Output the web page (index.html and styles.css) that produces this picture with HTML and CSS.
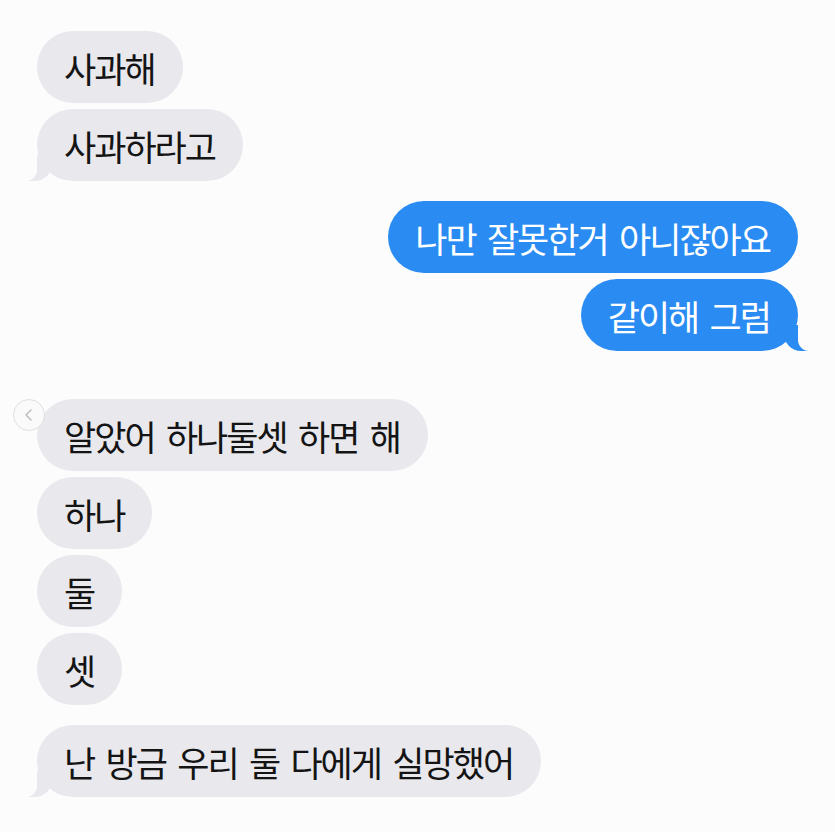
FILE: index.html
```html
<!DOCTYPE html>
<html lang="ko">
<head>
<meta charset="utf-8">
<link rel="stylesheet" href="styles.css">
</head>
<body>
<div class="chat">
  <div class="msg in first">사과해</div>
  <div class="msg in tail">사과하라고</div>

  <div class="msg out group">나만 잘못한거 아니잖아요</div>
  <div class="msg out tail">같이해 그럼</div>

  <div class="msg in group big">
    <span class="back"><svg width="12" height="14" viewBox="0 0 12 14"><path d="M8 2 L3 7 L8 12" fill="none" stroke="#b9b9bd" stroke-width="1.4" stroke-linecap="round" stroke-linejoin="round"/></svg></span>
    알았어 하나둘셋 하면 해
  </div>
  <div class="msg in">하나</div>
  <div class="msg in">둘</div>
  <div class="msg in">셋</div>
  <div class="msg in tail group2">난 방금 우리 둘 다에게 실망했어</div>
</div>
</body>
</html>
```

FILE: styles.css
```css
html, body {
  margin: 0;
  padding: 0;
  background: #fcfcfc;
}

.chat {
  width: 835px;
  height: 832px;
  box-sizing: border-box;
  padding: 31px 37px 0 37px;
  display: flex;
  flex-direction: column;
  align-items: flex-start;
  gap: 6px;
  font-family: "Noto Sans CJK KR", "Noto Sans", sans-serif;
}

.msg {
  position: relative;
  z-index: 0;
  height: 72px;
  box-sizing: border-box;
  padding: 0 28px 0 27px;
  border-radius: 36px;
  display: flex;
  align-items: center;
  font-size: 35px;
  letter-spacing: -2px;
  word-spacing: 3.5px;
  white-space: nowrap;
}

.in {
  background: #e8e8ed;
  color: #141414;
}

.out {
  background: #2a8cf2;
  color: #ffffff;
  align-self: flex-end;
}

.group {
  margin-top: 14px;
}

.msg.in.group.big {
  margin-top: 42px;
}

.group2 {
  margin-top: 14px;
}

.in.tail::before {
  content: "";
  position: absolute;
  bottom: 0;
  left: -9px;
  width: 24px;
  height: 26px;
  background: #e8e8ed;
  border-bottom-right-radius: 17px;
  z-index: -1;
}

.in.tail::after {
  content: "";
  position: absolute;
  bottom: 0;
  left: -26px;
  width: 26px;
  height: 26px;
  background: #fcfcfc;
  border-bottom-right-radius: 11px;
  z-index: -1;
}

.out.tail::before {
  content: "";
  position: absolute;
  bottom: 0;
  right: -12px;
  width: 26px;
  height: 26px;
  background: #2a8cf2;
  border-bottom-left-radius: 17px;
  z-index: -1;
}

.out.tail::after {
  content: "";
  position: absolute;
  bottom: 0;
  right: -26px;
  width: 26px;
  height: 26px;
  background: #fcfcfc;
  border-bottom-left-radius: 11px;
  z-index: -1;
}

.back {
  position: absolute;
  left: -24px;
  top: 0;
  width: 30px;
  height: 30px;
  border-radius: 50%;
  border: 1px solid #e0e0e3;
  background: #fafafa;
  display: flex;
  align-items: center;
  justify-content: center;
}
```
